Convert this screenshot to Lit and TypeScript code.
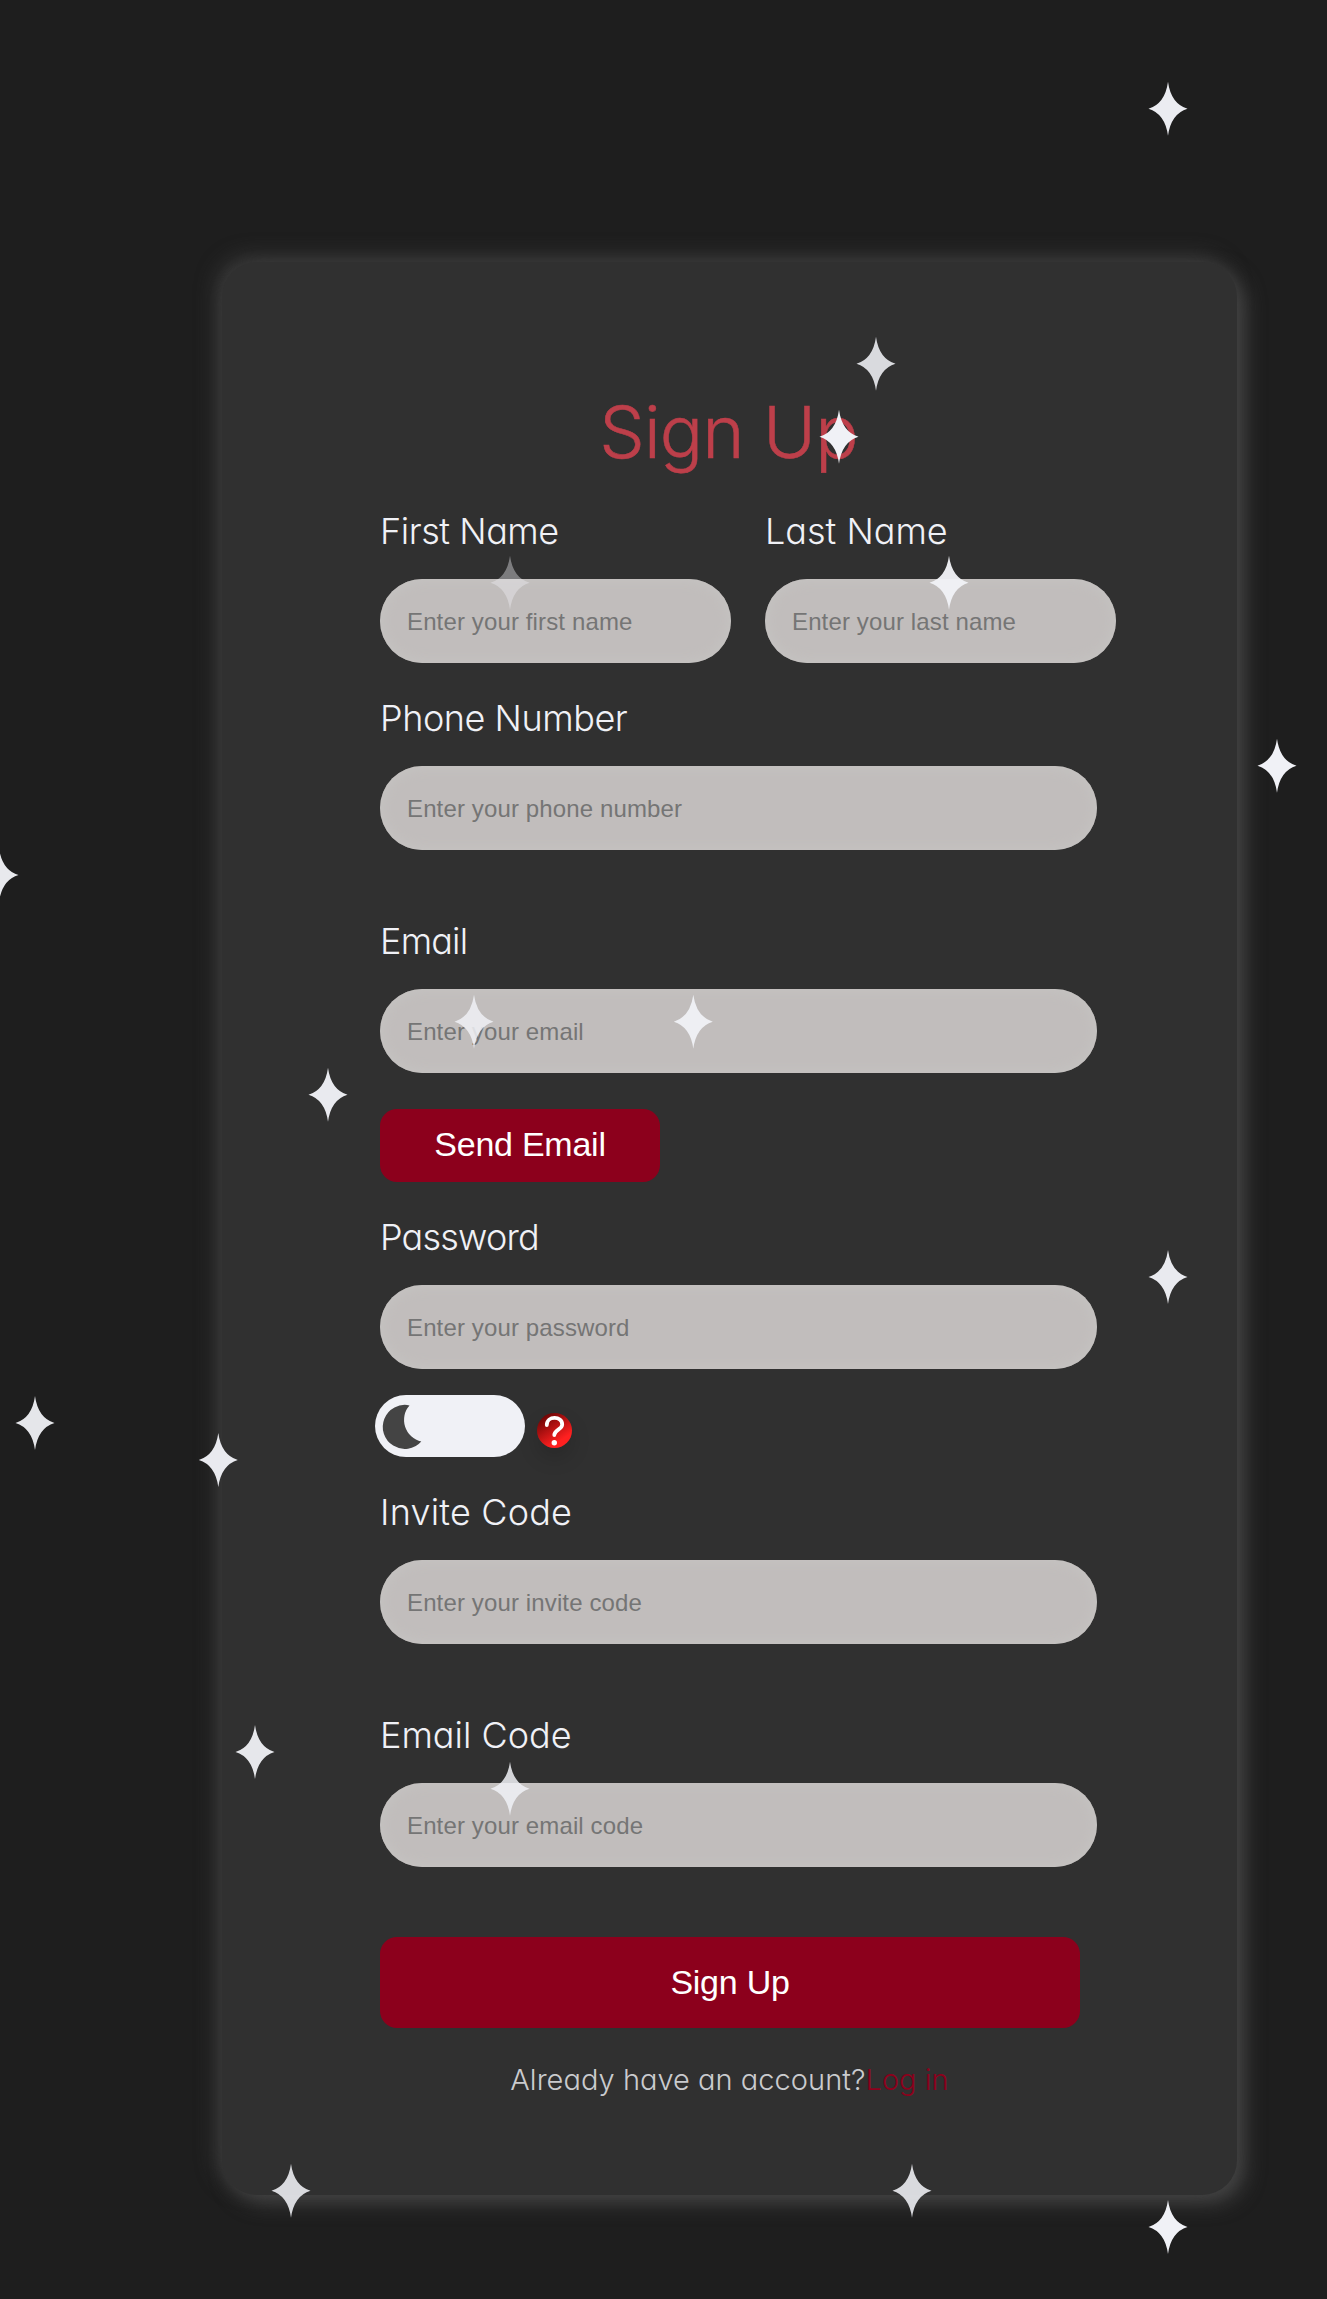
import { LitElement, html, svg, css } from "lit";
import { customElement } from "lit/decorators.js";

const STARS: [number, number, number][] = [
  [1168, 108.7, 0.98], [876, 363.7, 0.88], [839, 436.7, 1], [510, 582.7, 0.4],
  [949, 582.7, 0.96], [1277, 765.7, 1], [-1, 875, 0.96], [474, 1021.7, 0.85],
  [693.3, 1021.7, 0.95], [328, 1094.7, 0.97], [1168, 1277, 0.97], [35, 1423, 0.95],
  [218.3, 1460, 0.97], [255, 1752, 0.95], [510, 1788.7, 0.86], [291, 2190.7, 0.88],
  [912, 2190.7, 0.88], [1168, 2227, 1],
];

@customElement("app-root")
export class AppRoot extends LitElement {
  static styles = css`
    :host { display: block; }
    .page {
      position: relative; box-sizing: border-box; width: 1327px; height: 2299px;
      padding: 262px 0 0 222px; background: #1e1e1e; overflow: hidden;
      font-family: "Inter", "Liberation Sans", sans-serif; font-weight: 300;
      font-feature-settings: "cv11" 1; color: #f0f1f6;
    }
    .card {
      box-sizing: border-box; width: 1015px; height: 1933px; border-radius: 35px;
      padding: 126px 121px 0 158px; background: #303030;
      box-shadow: 8px 8px 20px #444444, -6px -6px 20px #393939;
      display: flex; flex-direction: column; align-items: flex-start;
    }
    h1 {
      margin: 0 0 33px; width: 699px; text-align: center; font-size: 72px; line-height: 88px;
      font-weight: 300; letter-spacing: -0.9px; text-indent: -2px; color: #bd3f4a;
      -webkit-text-stroke: 0.5px #bd3f4a;
    }
    .row { display: flex; gap: 34px; }
    .field { display: flex; flex-direction: column; gap: 26px; width: 717px; margin-bottom: 68.6px; }
    .half { width: 351px; }
    .half { margin-bottom: 32.6px; }
    .mid { margin-bottom: 35.6px; }
    .pass { margin-bottom: 25.6px; }
    .last { margin-bottom: 69.6px; }
    label { font-size: 36px; line-height: 44px; white-space: nowrap; }
    .snug label { letter-spacing: -0.45px; }
    .tight label { letter-spacing: -0.8px; }
    .wide label { letter-spacing: 0.2px; }
    input {
      box-sizing: border-box; width: 100%; height: 84.4px; border: 0; border-radius: 43px;
      padding: 2px 27px 0; background: #c1bdbc; box-shadow: inset 0 0 15px #c6c5c3;
      font: 400 24px "Liberation Sans", Arial, sans-serif; letter-spacing: 0.13px; color: #333;
    }
    input::placeholder { color: #757575; opacity: 1; }
    button {
      border: 0; border-radius: 17px; background: #8c001c; color: #fff; padding: 0;
      font: 400 34px "Liberation Sans", Arial, sans-serif; letter-spacing: -0.25px;
    }
    .send { width: 280px; height: 73px; margin-bottom: 33px; padding-bottom: 2px; }
    .submit { width: 700px; height: 91px; }
    .tools { display: flex; margin: 0 0 33px -5px; gap: 12px; height: 62px; }
    .toggle { width: 150px; height: 62px; border-radius: 31px; background: #f0f1f6; }
    .help {
      width: 35px; height: 35px; margin-top: 18px; border-radius: 50%;
      background: linear-gradient(147deg, #500000 0%, #ff2020 74%);
      box-shadow: 0 10px 20px rgba(0, 0, 0, 0.16);
    }
    .foot {
      width: 699px; margin: 34px 0 0; text-align: center; font-size: 29px; line-height: 36px;
      letter-spacing: 0.03px; color: #cacbce; white-space: nowrap;
    }
    .foot a { color: #8c001c; }
    .sky { position: absolute; inset: 0; pointer-events: none; }
  `;

  field(label: string, hint: string, kind = "") {
    return html`<div class="field ${kind}"><label>${label}</label><input placeholder=${hint} /></div>`;
  }

  render() {
    return html`<div class="page">
      <div class="card">
        <h1>Sign Up</h1>
        <div class="row">
          ${this.field("First Name", "Enter your first name", "half snug")}
          ${this.field("Last Name", "Enter your last name", "half")}
        </div>
        ${this.field("Phone Number", "Enter your phone number", "snug")}
        ${this.field("Email", "Enter your email", "mid tight")}
        <button class="send">Send Email</button>
        ${this.field("Password", "Enter your password", "pass tight")}
        <div class="tools">
          <div class="toggle">
            <svg width="60" height="62" viewBox="0 0 60 62">
              <path fill="#444" d="M34.5 10.4A22 22 0 1 0 46.3 46.4A22 22 0 0 1 34.5 10.4Z" />
            </svg>
          </div>
          <div class="help">
            <svg width="35" height="35" viewBox="0 0 35 35" fill="none">
              <path d="M9.8 12C9.8 2.6 25.2 2.6 25.2 11.5C25.2 16.5 17.3 16.8 17.3 22" stroke="#fff" stroke-width="3.8" stroke-linecap="round" />
              <circle cx="17.3" cy="29.8" r="2.7" fill="#fff" />
            </svg>
          </div>
        </div>
        ${this.field("Invite Code", "Enter your invite code", "wide")}
        ${this.field("Email Code", "Enter your email code", "last")}
        <button class="submit">Sign Up</button>
        <p class="foot">Already have an account?<a>Log in</a></p>
      </div>
      <svg class="sky" width="1327" height="2299" viewBox="0 0 1327 2299">
        ${STARS.map(([x, y, o]) => svg`<path transform="translate(${x} ${y})" opacity=${o} fill="#f0f1f6"
          d="M0 -27Q3 -5 19.5 0Q3 5 0 27Q-3 5 -19.5 0Q-3 -5 0 -27Z" />`)}
      </svg>
    </div>`;
  }
}
